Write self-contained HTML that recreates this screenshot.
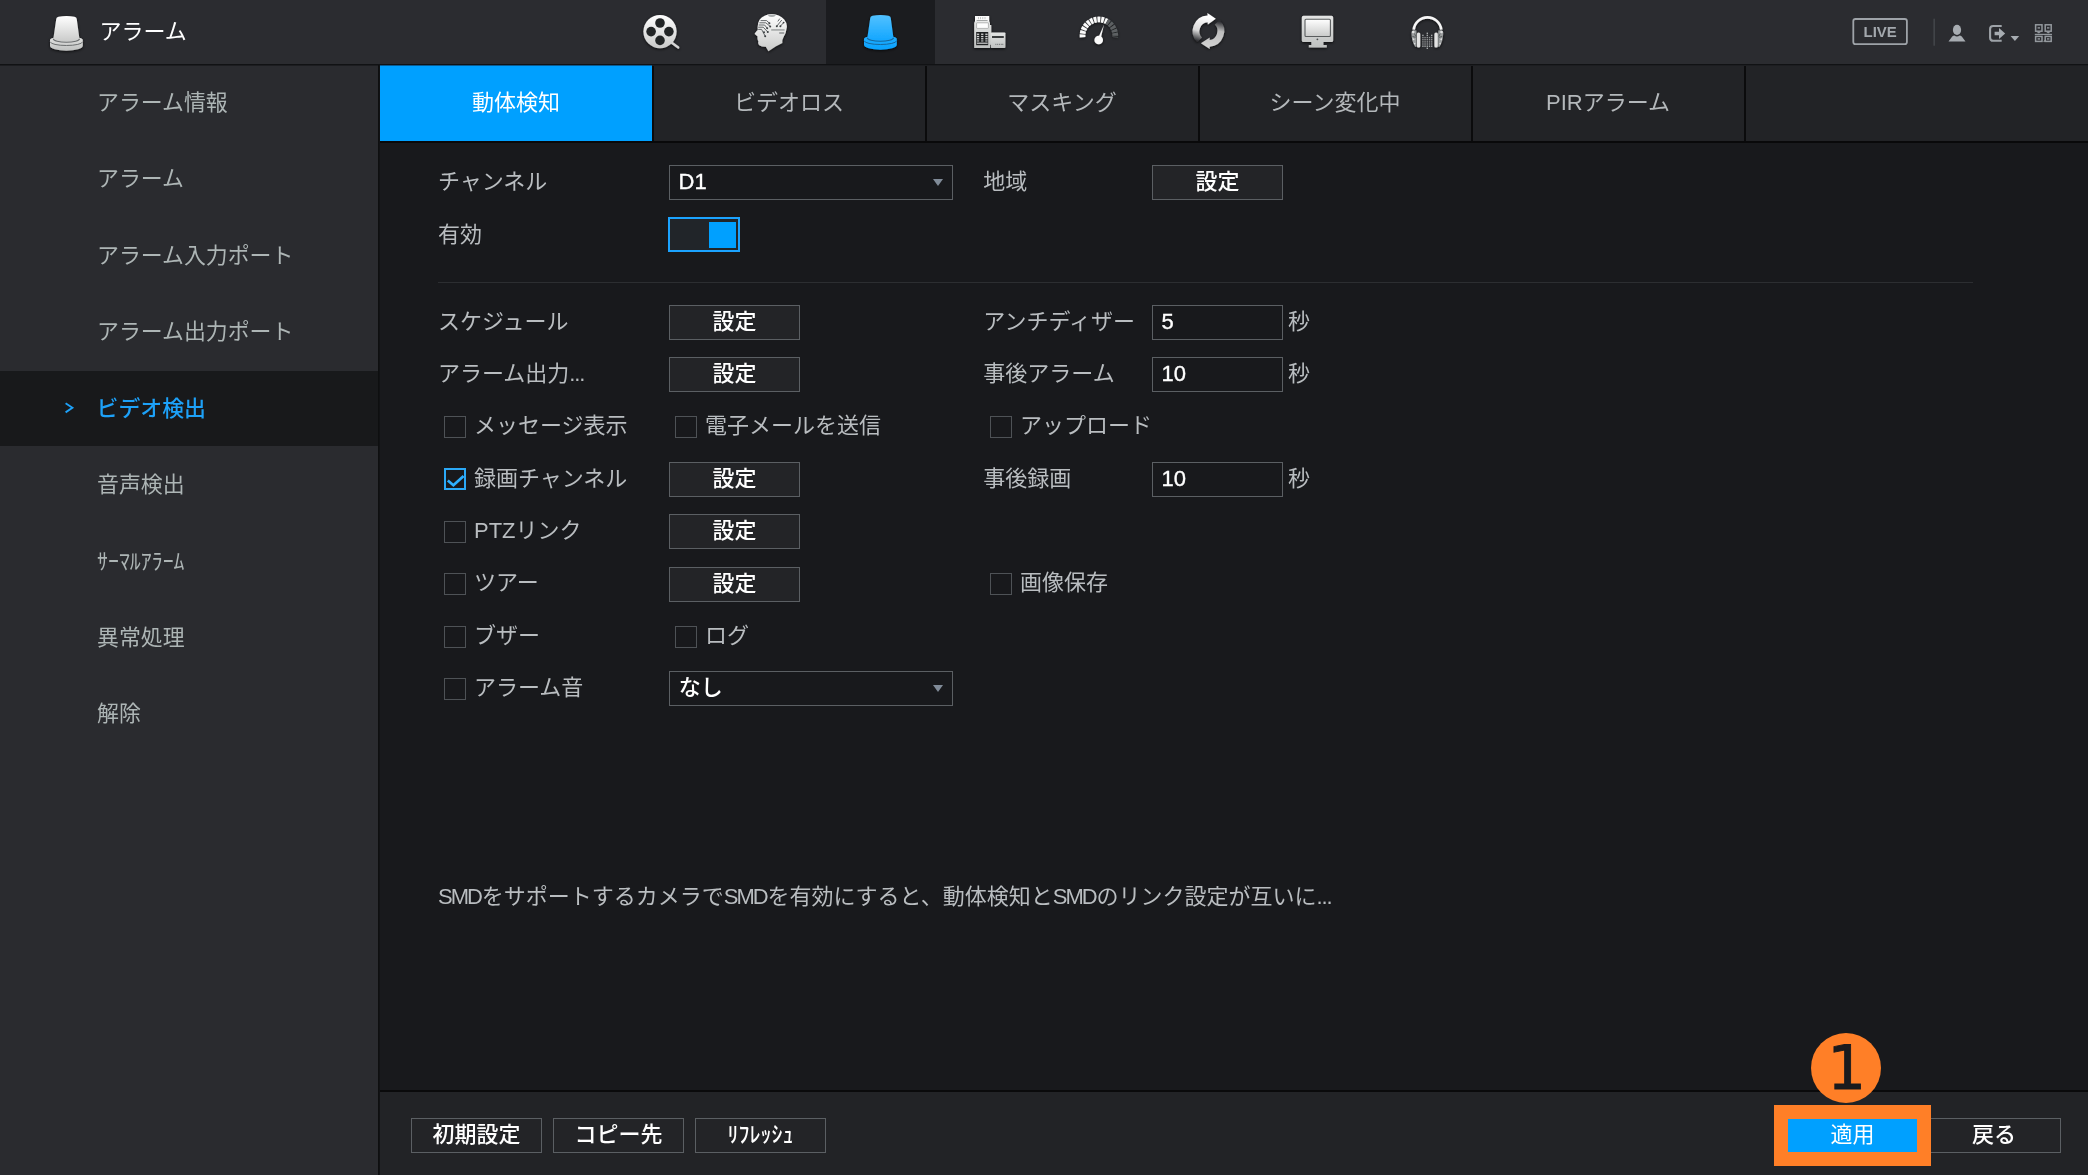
<!DOCTYPE html>
<html lang="ja">
<head>
<meta charset="utf-8">
<title>アラーム</title>
<style>
*{box-sizing:border-box;margin:0;padding:0}
html,body{width:2088px;height:1175px;overflow:hidden;background:#18191c}
body{position:relative;will-change:transform;font-family:"Liberation Sans","Noto Sans CJK JP",sans-serif;font-size:22px;color:#b9bdc0;line-height:1}
.abs{position:absolute}
#topbar{position:absolute;left:0;top:0;width:2088px;height:64px;background:#2b2c30}
#topline{position:absolute;left:0;top:64px;width:2088px;height:2px;background:linear-gradient(#111214 50%,#1c1d20 50%)}
#title{position:absolute;left:99.5px;top:0;height:64px;line-height:63px;color:#fff;font-size:22px}
#navact{position:absolute;left:826px;top:0;width:109px;height:64px;background:#1b1c1f}
#sidebar{position:absolute;left:0;top:66px;width:378px;height:1109px;background:#2a2b2f}
#sideline{position:absolute;left:378px;top:65px;width:2px;height:1110px;background:linear-gradient(90deg,#0e0f10 50%,#111214 50%)}
.sitem{position:absolute;left:0;width:378px;height:76px;line-height:78px;padding-left:97px;color:#adb5b5;font-size:21.9px;white-space:nowrap}
.sitem.act{background:#18191b;color:#1da1f8;font-weight:500;line-height:75px;height:75px;padding-left:96.5px}
.narrow{display:inline-block;transform-origin:0 50%;transform:none}
#tabbar{position:absolute;left:380px;top:66px;width:1708px;height:76px;background:#222326}
#tabline{position:absolute;left:380px;top:141px;width:1708px;height:2px;background:#09090a}
.tab{position:absolute;top:66px;width:272px;height:75px;line-height:73px;text-align:center;color:#b4b8bb;font-size:22px;white-space:nowrap}
.tab.act{background:#00a0ff;color:#fff;box-shadow:0 -1px 0 #0a5c93}
.tabsep{position:absolute;top:66px;width:2px;height:75px;background:#0b0b0c}
#footer{position:absolute;left:380px;top:1092px;width:1708px;height:83px;background:#222326}
#footline{position:absolute;left:380px;top:1090px;width:1708px;height:2px;background:#0a0a0b}
.lbl{position:absolute;height:34px;line-height:32px;white-space:nowrap;color:#b9bdc0;font-size:22px}
.btn{position:absolute;height:35px;line-height:31px;text-align:center;border:1px solid #5b5f63;background:#232427;color:#fff;font-size:22px;font-weight:500;white-space:nowrap}
.inp{position:absolute;height:35px;line-height:31px;border:1px solid #5b5f63;background:#18191c;color:#fff;font-size:22px;font-weight:500;padding-left:8.8px;white-space:nowrap}
.cb{position:absolute;overflow:hidden;width:22px;height:22px;border:1px solid #4e5256;background:#18191c}
.cb.on{border:2px solid #2ba9f7}
.cb svg{display:block}
.narrow2{display:inline-block;transform:none}
.num{padding-left:8.5px;-webkit-text-stroke:.35px #fff}
.ls{letter-spacing:-2px;margin-right:.8px}
.caret{position:absolute;width:0;height:0;border-left:5.5px solid transparent;border-right:5.5px solid transparent;border-top:7.5px solid #808b98}
</style>
</head>
<body>
<div id="topbar"></div>
<div id="navact"></div>
<div id="topline"></div>
<!-- ICONS -->
<svg id="topsvg" class="abs" style="left:0;top:0" width="2088" height="64" viewBox="0 0 2088 64">
<defs>
<linearGradient id="gW" x1="0" y1="0" x2="0" y2="1"><stop offset="0" stop-color="#ffffff"/><stop offset="1" stop-color="#c9cac9"/></linearGradient>
<linearGradient id="gW2" x1="0" y1="0" x2="0" y2="1"><stop offset="0" stop-color="#e4e5e4"/><stop offset="1" stop-color="#bfc1c0"/></linearGradient>
<linearGradient id="gB" x1="0" y1="0" x2="0" y2="1"><stop offset="0" stop-color="#52c1ff"/><stop offset="1" stop-color="#12a6ff"/></linearGradient>
<linearGradient id="gB2" x1="0" y1="0" x2="0" y2="1"><stop offset="0" stop-color="#22aeff"/><stop offset="1" stop-color="#0aa2ff"/></linearGradient>
<linearGradient id="gR1" gradientUnits="userSpaceOnUse" x1="1204" y1="16" x2="1197" y2="41"><stop offset="0" stop-color="#ffffff"/><stop offset=".6" stop-color="#d8d8d8"/><stop offset="1" stop-color="#2b2c30"/></linearGradient>
<linearGradient id="gR2" gradientUnits="userSpaceOnUse" x1="1217" y1="21" x2="1212" y2="48"><stop offset="0" stop-color="#2b2c30"/><stop offset=".35" stop-color="#bdbdbd"/><stop offset="1" stop-color="#d2d2d2"/></linearGradient>
<filter id="sh" x="-30%" y="-30%" width="160%" height="170%"><feGaussianBlur in="SourceAlpha" stdDeviation="1.6"/><feOffset dy="1.2"/><feComponentTransfer><feFuncA type="linear" slope=".75"/></feComponentTransfer><feMerge><feMergeNode/><feMergeNode in="SourceGraphic"/></feMerge></filter>
</defs>
<!-- title beacon -->
<g filter="url(#sh)" transform="translate(50,15.8)"><path d="M0 24 A16.4 3.4 0 0 1 32.8 24 L32.8 30 A16.4 5 0 0 1 0 30 Z" fill="url(#gW2)"/><path d="M0.3 26 A16.1 3.7 0 0 0 32.5 26" fill="none" stroke="#6c6f70" stroke-width="1"/><path d="M6.3 3 Q6.5 1.2 8.6 0.9 Q16.5 -0.6 24.4 0.9 Q26.5 1.2 26.7 3 L29.4 22.7 A13 3.3 0 0 1 3.4 22.7 Z" fill="url(#gW)"/><path d="M3.3 22.9 A13.1 3.5 0 0 0 29.5 22.9" fill="none" stroke="#6c6f70" stroke-width="1.1"/></g>
<!-- blue beacon -->
<g filter="url(#sh)" transform="translate(864,14.8)"><path d="M0 24 A16.4 3.4 0 0 1 32.8 24 L32.8 30 A16.4 5 0 0 1 0 30 Z" fill="url(#gB2)"/><path d="M0.3 26 A16.1 3.7 0 0 0 32.5 26" fill="none" stroke="#17679d" stroke-width="1"/><path d="M6.3 3 Q6.5 1.2 8.6 0.9 Q16.5 -0.6 24.4 0.9 Q26.5 1.2 26.7 3 L29.4 22.7 A13 3.3 0 0 1 3.4 22.7 Z" fill="url(#gB)"/><path d="M3.3 22.9 A13.1 3.5 0 0 0 29.5 22.9" fill="none" stroke="#17679d" stroke-width="1.1"/></g>

<!-- film reel -->
<g filter="url(#sh)">
<path d="M671.5 42.5 L678.3 47.5" stroke="#d6d6d6" stroke-width="2.2" stroke-linecap="round"/>
<circle cx="660" cy="31.6" r="16.6" fill="url(#gW)"/>
</g>
<g fill="#222526"><circle cx="660" cy="23" r="4.8"/><circle cx="651.1" cy="31.6" r="4.8"/><circle cx="668.9" cy="31.6" r="4.8"/><circle cx="660" cy="40.4" r="4.8"/></g>

<!-- head -->
<g filter="url(#sh)">
<path d="M771.7 13.9 Q779.5 14.2 784.2 19.6 Q787.4 23.6 786.8 27.5 Q786.4 32.5 783.4 37.6 Q782 40.2 782.4 42.9 L776 46.2 L768.4 51.2 L765.8 46.8 Q762 47 759.2 45.2 Q757.6 43.6 758.4 41.4 Q757 39.4 757.6 36.4 L754.7 34 Q754.6 32.8 757.8 29.9 Q757 24 759.6 19.8 Q763.6 14.2 771.7 13.9 Z" fill="url(#gW)"/>
</g>
<g stroke="#55595b" stroke-width=".9" fill="none">
<path d="M760.6 20.6 H766.6 L769.4 23.2"/><path d="M759.4 22.8 H765.8 L770.2 26.4"/><path d="M758.6 25 H764.6 L767.2 28.2"/><path d="M758.2 27.2 H763.2 L767.8 32"/><path d="M758.2 29.4 H761.6 L765.2 36.2"/>
<path d="M783.6 22.6 L780.4 26.2"/><path d="M781.8 20 L776.8 26.2"/><path d="M779.8 18.6 L777.8 21.4"/>
</g>
<g fill="#3c4042"><circle cx="769.4" cy="23.2" r="1"/><circle cx="770.2" cy="26.4" r="1"/><circle cx="767.2" cy="28.2" r="1"/><circle cx="767.8" cy="32" r="1"/><circle cx="764" cy="32.2" r="1"/><circle cx="765.2" cy="36.2" r="1"/><circle cx="776.8" cy="26.2" r="1"/><circle cx="780.4" cy="26.2" r="1"/><circle cx="783.6" cy="22.6" r=".9"/></g>
<rect x="771.2" y="29.4" width="13.4" height="1.1" fill="#85898a"/><rect x="779.2" y="32.4" width="5" height="1.2" fill="#777b7c"/>
<path d="M767.6 15.4 Q771.8 18.4 776 15.4 Q771.8 13.6 767.6 15.4Z" fill="#a9adae"/>

<!-- POS -->
<g filter="url(#sh)">
<rect x="975" y="16" width="14.2" height="6" fill="#fbfbfb"/>
<path d="M974.2 23 Q974.2 21.3 976 21.3 H988.4 Q990 21.3 990 23 V25 H991.3 V44.7 H990 V48.1 H974.2 Z" fill="url(#gW2)"/>
<rect x="990.8" y="32.5" width="14.6" height="15.6" rx=".8" fill="url(#gW2)"/>
</g>
<rect x="976.6" y="20" width="11" height=".9" fill="#9b9d9d"/>
<g fill="#b9bbbb"><rect x="978" y="17" width=".8" height="2.2"/><rect x="980.2" y="17" width=".8" height="2.2"/><rect x="982.4" y="17" width=".8" height="2.2"/><rect x="984.6" y="17" width=".8" height="2.2"/></g>
<rect x="976.6" y="22.8" width="11.8" height="5.6" rx=".6" fill="#fdfdfd" stroke="#8d8f8f" stroke-width=".6"/>
<rect x="976.2" y="32" width="12" height="13.2" fill="#1f2122"/>
<g fill="#d2d3d3">
<rect x="976.9" y="33.6" width="2.3" height="1.3"/><rect x="981.1" y="33.6" width="2.3" height="1.3"/><rect x="985.3" y="33.6" width="2.3" height="1.3"/>
<rect x="976.9" y="35.9" width="2.3" height="1.3"/><rect x="981.1" y="35.9" width="2.3" height="1.3"/><rect x="985.3" y="35.9" width="2.3" height="1.3"/>
<rect x="976.9" y="38.1" width="2.3" height="1.3"/><rect x="981.1" y="38.1" width="2.3" height="1.3"/><rect x="985.3" y="38.1" width="2.3" height="1.3"/>
<rect x="976.9" y="40.3" width="2.3" height="1.3" opacity=".8"/><rect x="981.1" y="40.3" width="2.3" height="1.3" opacity=".8"/><rect x="985.3" y="40.3" width="2.3" height="1.3" opacity=".8"/>
<rect x="976.9" y="42.6" width="10.8" height="1.2"/>
</g>
<rect x="992" y="36.1" width="11.8" height="1.8" fill="#2a2c2d"/>
<g fill="#777a7b"><rect x="995.3" y="43.8" width="1.1" height="1.1"/><rect x="997.1" y="43.8" width="1.1" height="1.1"/><rect x="998.9" y="43.8" width="1.1" height="1.1"/><rect x="1000.7" y="43.8" width="1.1" height="1.1"/><rect x="1002.2" y="43.8" width="1.1" height="1.1"/></g>

<!-- gauge -->
<g filter="url(#sh)" fill="none" stroke-width="5.7">
<path d="M1082.6 37.2 A16.3 16.3 0 0 1 1106.8 21.5" stroke="#fbfbfb" stroke-dasharray="2.7 0.96"/>
<path d="M1106.8 21.5 A16.3 16.3 0 0 1 1115.2 37.2" stroke="#5d6163" stroke-dasharray="2.7 0.96"/>
<path d="M1098.2 38 L1103.9 25 L1100.6 39 Z" fill="#fbfbfb" stroke="none"/>
<circle cx="1098.7" cy="40" r="4.3" fill="#fbfbfb" stroke="none"/>
</g>

<!-- refresh -->
<g filter="url(#sh)">
<path d="M1207.6 15.4 A15.7 15.7 0 0 0 1197.2 42.2 L1202 37.6 A9.1 9.1 0 0 1 1207.6 22.2 L1207.9 24.6 L1215.8 18.7 L1207.4 12.9 Z" fill="url(#gR1)"/>
<path d="M1209.6 46.8 A15.7 15.7 0 0 0 1219.6 20 L1214.8 24.6 A9.1 9.1 0 0 1 1209.6 40 L1209.8 37.6 L1200.9 43.3 L1209.8 49.1 Z" fill="url(#gR2)"/>
</g>

<!-- monitor -->
<g filter="url(#sh)">
<path d="M1303.4 15.8 H1331.6 Q1333.2 15.8 1333.2 17.4 V40.5 Q1333.2 42.1 1331.6 42.1 H1323.4 V45 H1326.8 V47.4 H1308.8 V45 H1311.4 V42.1 H1303.4 Q1301.8 42.1 1301.8 40.5 V17.4 Q1301.8 15.8 1303.4 15.8 Z" fill="url(#gW2)"/>
</g>
<rect x="1305" y="19.3" width="25.4" height="17.2" rx="1" fill="url(#gW)" stroke="#5a5d5e" stroke-width="1.1"/>
<circle cx="1317.4" cy="39.3" r=".9" fill="#4d5051"/>

<!-- headphones -->
<g filter="url(#sh)">
<path d="M1413.7 29.6 A13.9 13.9 0 0 1 1441.3 29.6" fill="none" stroke="#f6f6f6" stroke-width="2.6"/>
<rect x="1416.9" y="32.5" width="3.4" height="15" rx="1.6" fill="#e2e2e2"/>
<rect x="1434.4" y="32.5" width="3.4" height="15" rx="1.6" fill="#e2e2e2"/>
<path d="M1416.4 30.4 L1413.5 30.2 Q1411.1 30.9 1411.5 33.7 Q1411.8 41.4 1415.2 46.7 L1416.4 46.7 Z" fill="#9a9d9e"/>
<path d="M1438.3 30.4 L1441.2 30.2 Q1443.6 30.9 1443.2 33.7 Q1442.9 41.4 1439.5 46.7 L1438.3 46.7 Z" fill="#9a9d9e"/>
</g>
<g fill="#e0e1e1"><circle cx="1413.2" cy="32" r="1.3"/><circle cx="1441.5" cy="32" r="1.3"/><path d="M1412.6 38 L1414.8 39.2 L1412.8 40.4Z"/><path d="M1442.1 38 L1439.9 39.2 L1441.9 40.4Z"/><path d="M1413.6 42.4 L1415.6 43.4 L1414.4 44.8Z"/><path d="M1441.1 42.4 L1439.1 43.4 L1440.3 44.8Z"/></g>
<g stroke="#3a3d3f" stroke-width=".7"><path d="M1414.6 33.6 L1415.8 36.6"/><path d="M1440.1 33.6 L1438.9 36.6"/><path d="M1412.4 36.4 L1415.6 37.4"/><path d="M1442.3 36.4 L1439.1 37.4"/></g>
<g fill="#a6a9aa">
<rect x="1422.20" y="34.70" width="1.4" height="1.4" opacity="1"/>
<rect x="1422.20" y="36.90" width="1.4" height="1.4" opacity="0.8"/>
<rect x="1422.20" y="39.00" width="1.4" height="1.4" opacity="0.8"/>
<rect x="1422.20" y="41.20" width="1.4" height="1.4" opacity="0.8"/>
<rect x="1422.20" y="43.30" width="1.4" height="1.4" opacity="0.8"/>
<rect x="1422.20" y="45.50" width="1.4" height="1.4" opacity="1"/>
<rect x="1424.35" y="36.90" width="1.4" height="1.4" opacity="0.8"/>
<rect x="1424.35" y="39.00" width="1.4" height="1.4" opacity="0.8"/>
<rect x="1424.35" y="41.20" width="1.4" height="1.4" opacity="0.8"/>
<rect x="1424.35" y="43.30" width="1.4" height="1.4" opacity="0.8"/>
<rect x="1424.35" y="45.50" width="1.4" height="1.4" opacity="1"/>
<rect x="1426.60" y="32.60" width="1.4" height="1.4" opacity="1"/>
<rect x="1426.60" y="34.70" width="1.4" height="1.4" opacity="1"/>
<rect x="1426.60" y="36.90" width="1.4" height="1.4" opacity="0.8"/>
<rect x="1426.60" y="39.00" width="1.4" height="1.4" opacity="0.8"/>
<rect x="1426.60" y="41.20" width="1.4" height="1.4" opacity="0.8"/>
<rect x="1426.60" y="43.30" width="1.4" height="1.4" opacity="0.8"/>
<rect x="1426.60" y="45.50" width="1.4" height="1.4" opacity="1"/>
<rect x="1426.60" y="47.60" width="1.4" height="1.4" opacity="1"/>
<rect x="1428.85" y="36.90" width="1.4" height="1.4" opacity="0.8"/>
<rect x="1428.85" y="39.00" width="1.4" height="1.4" opacity="0.8"/>
<rect x="1428.85" y="41.20" width="1.4" height="1.4" opacity="0.8"/>
<rect x="1428.85" y="43.30" width="1.4" height="1.4" opacity="0.8"/>
<rect x="1428.85" y="45.50" width="1.4" height="1.4" opacity="1"/>
<rect x="1431.00" y="34.70" width="1.4" height="1.4" opacity="1"/>
<rect x="1431.00" y="36.90" width="1.4" height="1.4" opacity="0.8"/>
<rect x="1431.00" y="39.00" width="1.4" height="1.4" opacity="0.8"/>
<rect x="1431.00" y="41.20" width="1.4" height="1.4" opacity="0.8"/>
<rect x="1431.00" y="43.30" width="1.4" height="1.4" opacity="0.8"/>
<rect x="1431.00" y="45.50" width="1.4" height="1.4" opacity="1"/>
</g>
<!-- right side -->
<rect x="1853.3" y="19" width="53.6" height="25.2" rx="2.2" fill="none" stroke="#9ea3a8" stroke-width="1.8"/>
<text x="1880.2" y="37.2" text-anchor="middle" font-family="Liberation Sans, sans-serif" font-weight="700" font-size="15.4" fill="#a3a8ad" textLength="33.2" lengthAdjust="spacingAndGlyphs">LIVE</text>
<rect x="1933.5" y="18.7" width="1.3" height="27" fill="#484b4f"/>
<g fill="#a7acb1">
<ellipse cx="1957" cy="29.9" rx="4.1" ry="5.1"/>
<path d="M1948.5 41.6 L1952.2 36.4 Q1953.4 35.4 1954.3 35.4 Q1957 37.6 1959.7 35.4 Q1960.6 35.4 1961.8 36.4 L1965.5 41.6 Z"/>
<path d="M1994.6 31.7 H1999 V28 L2005.2 33.5 L1999 39 V35.3 H1994.6 Z"/>
<path d="M2010.6 36 H2019.2 L2014.9 41 Z"/>
</g>
<path d="M2001.7 26 H1993.2 Q1990.1 26 1990.1 29.1 V37.7 Q1990.1 40.8 1993.2 40.8 H2001.7" fill="none" stroke="#9ea3a8" stroke-width="2.1"/>
<g fill="none" stroke="#93989d" stroke-width="1.5">
<rect x="2035.6" y="24.8" width="6.4" height="6.4"/><rect x="2045.2" y="24.8" width="6" height="6.4"/><rect x="2035.6" y="36.4" width="6.4" height="5"/><rect x="2045.2" y="36.4" width="6" height="5"/>
</g>
<g fill="#93989d"><rect x="2034.8" y="33.8" width="17.2" height="1.2"/><rect x="2037.6" y="27.2" width="2.4" height="1.4"/><rect x="2047" y="27.2" width="2.4" height="1.4"/><rect x="2037.6" y="38.2" width="2.4" height="1.4"/><rect x="2047" y="38.2" width="2.4" height="1.4"/><path d="M2036 31.6 H2041.6 L2038.8 33.4Z"/><path d="M2045.6 31.6 H2051 L2048.2 33.4Z"/><path d="M2043 41.8 L2046 38.8 V41.8Z"/></g>
</svg>

<!-- /ICONS -->
<div id="title">アラーム</div>

<div id="sidebar"></div>
<div id="sideline"></div>
<div class="sitem" style="top:64px">アラーム情報</div>
<div class="sitem" style="top:140px">アラーム</div>
<div class="sitem" style="top:217px">アラーム入力ポート</div>
<div class="sitem" style="top:293px">アラーム出力ポート</div>
<div class="sitem act" style="top:371px">ビデオ検出</div>
<svg class="abs" style="left:60px;top:398px" width="20" height="20" viewBox="60 398 20 20"><path d="M65.6 403.2 L72.4 407.8 L65.6 412.4" fill="none" stroke="#1da1f8" stroke-width="1.9"/></svg>
<div class="sitem" style="top:446px">音声検出</div>
<div class="sitem" style="top:523px"><span class="narrow">ｻｰﾏﾙｱﾗｰﾑ</span></div>
<div class="sitem" style="top:599px">異常処理</div>
<div class="sitem" style="top:675px">解除</div>

<div id="tabbar"></div>
<div class="tab act" style="left:380px">動体検知</div>
<div class="tabsep" style="left:652px"></div>
<div class="tab" style="left:653px">ビデオロス</div>
<div class="tabsep" style="left:925px"></div>
<div class="tab" style="left:926px">マスキング</div>
<div class="tabsep" style="left:1198px"></div>
<div class="tab" style="left:1199px">シーン変化中</div>
<div class="tabsep" style="left:1471px"></div>
<div class="tab" style="left:1472px">PIRアラーム</div>
<div class="tabsep" style="left:1744px"></div>
<div id="tabline"></div>

<!-- FORM -->

<div class="lbl" style="left:438px;top:166px">チャンネル</div>
<div class="inp num" style="left:669px;top:165px;width:284px">D1</div>
<div class="caret" style="left:933px;top:179px"></div>
<div class="lbl" style="left:983.3px;top:166px">地域</div>
<div class="btn" style="left:1152px;top:165px;width:131px">設定</div>

<div class="lbl" style="left:438px;top:219px">有効</div>
<div class="abs" style="left:668px;top:217px;width:72px;height:35px;border:2px solid #1ba3ff;background:#212529"></div>
<div class="abs" style="left:709px;top:222px;width:27px;height:26px;background:#00a0ff"></div>

<div class="abs" style="left:438px;top:282px;width:1535px;height:1px;background:#2c2e31"></div>

<div class="lbl" style="left:438px;top:306px">スケジュール</div>
<div class="btn" style="left:669px;top:305px;width:131px">設定</div>
<div class="lbl" style="left:983.3px;top:306px">アンチディザー</div>
<div class="inp num" style="left:1152px;top:305px;width:131px">5</div>
<div class="lbl" style="left:1288px;top:306px">秒</div>

<div class="lbl" style="left:438px;top:358px">アラーム出力<span style="letter-spacing:-1.1px">...</span></div>
<div class="btn" style="left:669px;top:357px;width:131px">設定</div>
<div class="lbl" style="left:983.3px;top:358px">事後アラーム</div>
<div class="inp num" style="left:1152px;top:357px;width:131px">10</div>
<div class="lbl" style="left:1288px;top:358px">秒</div>

<div class="cb" style="left:444px;top:416px"></div>
<div class="lbl" style="left:474px;top:410px">メッセージ表示</div>
<div class="cb" style="left:675px;top:416px"></div>
<div class="lbl" style="left:705px;top:410px">電子メールを送信</div>
<div class="cb" style="left:990px;top:416px"></div>
<div class="lbl" style="left:1020px;top:410px">アップロード</div>

<div class="cb on" style="left:444px;top:468px"><svg width="22" height="22" viewBox="0 0 22 22" style="position:absolute;left:-2px;top:-2px"><path d="M3.8 12.4 L9.4 17.2 L19.6 8" fill="none" stroke="#2eb0ff" stroke-width="2.7"/></svg></div>
<div class="lbl" style="left:474px;top:463px">録画チャンネル</div>
<div class="btn" style="left:669px;top:462px;width:131px">設定</div>
<div class="lbl" style="left:983.3px;top:463px">事後録画</div>
<div class="inp num" style="left:1152px;top:462px;width:131px">10</div>
<div class="lbl" style="left:1288px;top:463px">秒</div>

<div class="cb" style="left:444px;top:521px"></div>
<div class="lbl" style="left:474px;top:515px">PTZリンク</div>
<div class="btn" style="left:669px;top:514px;width:131px">設定</div>

<div class="cb" style="left:444px;top:573px"></div>
<div class="lbl" style="left:474px;top:567px">ツアー</div>
<div class="btn" style="left:669px;top:567px;width:131px">設定</div>
<div class="cb" style="left:990px;top:573px"></div>
<div class="lbl" style="left:1020px;top:567px">画像保存</div>

<div class="cb" style="left:444px;top:626px"></div>
<div class="lbl" style="left:474px;top:620px">ブザー</div>
<div class="cb" style="left:675px;top:626px"></div>
<div class="lbl" style="left:705px;top:620px">ログ</div>

<div class="cb" style="left:444px;top:678px"></div>
<div class="lbl" style="left:474px;top:672px">アラーム音</div>
<div class="inp" style="left:669px;top:671px;width:284px">なし</div>
<div class="caret" style="left:933px;top:685px"></div>

<div class="lbl" style="left:438px;top:881px"><span class="ls">SMD</span>をサポートするカメラで<span class="ls">SMD</span>を有効にすると、動体検知と<span class="ls">SMD</span>のリンク設定が互いに<span style="letter-spacing:-1.1px">...</span></div>


<div id="footline"></div>
<div id="footer"></div>

<div class="btn" style="left:411px;top:1118px;width:131px">初期設定</div>
<div class="btn" style="left:553px;top:1118px;width:131px">コピー先</div>
<div class="btn" style="left:695px;top:1118px;width:131px"><span class="narrow2">ﾘﾌﾚｯｼｭ</span></div>

<div class="btn" style="left:1930px;top:1118px;width:131px;padding-right:3px">戻る</div>
<div class="abs" style="left:1774px;top:1105px;width:157px;height:61px;background:#ff7f27"></div>
<div class="abs" style="left:1788px;top:1119px;width:129px;height:33px;background:#00a0ff;color:#fff;text-align:center;line-height:31px;font-size:22px;white-space:nowrap">適用</div>
<div class="abs" style="left:1811px;top:1033px;width:70px;height:70px;border-radius:50%;background:#ff7f27"></div>
<div class="abs" id="one" style="left:1811.6px;top:1033.4px;width:70px;height:70px;text-align:center;line-height:70px;font-size:61px;font-weight:400;-webkit-text-stroke:.9px #1a1b1e;color:#1a1b1e;font-family:'DejaVu Sans','Liberation Sans',sans-serif">1</div>


</body>
</html>
